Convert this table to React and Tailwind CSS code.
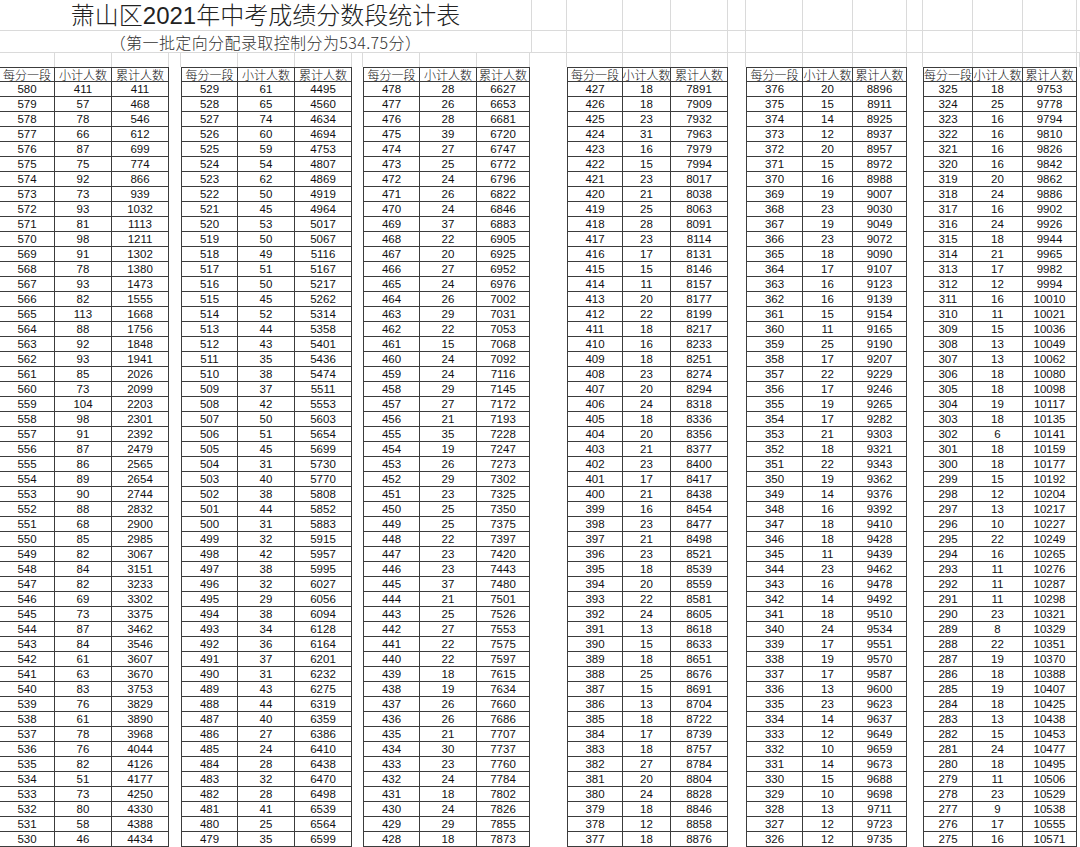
import React from 'react'

const groups = [
  { start: 580, sub: [411,57,78,66,87,75,92,73,93,81,98,91,78,93,82,113,88,92,93,85,73,104,98,91,87,86,89,90,88,68,85,82,84,82,69,73,87,84,61,63,83,76,61,78,76,82,51,73,80,58,46] },
  { start: 529, sub: [61,65,74,60,59,54,62,50,45,53,50,49,51,50,45,52,44,43,35,38,37,42,50,51,45,31,40,38,44,31,32,42,38,32,29,38,34,36,37,31,43,44,40,27,24,28,32,28,41,25,35] },
  { start: 478, sub: [28,26,28,39,27,25,24,26,24,37,22,20,27,24,26,29,22,15,24,24,29,27,21,35,19,26,29,23,25,25,22,23,23,37,21,25,27,22,22,18,19,26,26,21,30,23,24,18,24,29,18] },
  { start: 427, sub: [18,18,23,31,16,15,23,21,25,28,23,17,15,11,20,22,18,16,18,23,20,24,18,20,21,23,17,21,16,23,21,23,18,20,22,24,13,15,18,25,15,13,18,17,18,27,20,24,18,12,18] },
  { start: 376, sub: [20,15,14,12,20,15,16,19,23,19,23,18,17,16,16,15,11,25,17,22,17,19,17,21,18,22,19,14,16,18,18,11,23,16,14,18,24,17,19,17,13,23,14,12,10,14,15,10,13,12,12] },
  { start: 325, sub: [18,25,16,16,16,16,20,24,16,24,18,21,17,12,16,11,15,13,13,18,18,19,18,6,18,18,15,12,13,10,22,16,11,11,11,23,8,22,19,18,19,18,13,15,24,18,11,23,9,17,16] },
]

// running totals across all groups
let total = 0
const cum = groups.map(g => g.sub.map(n => (total += n)))

// column widths: [score, count, cumulative] per group, then the gap that follows
const layout = [
  { cols: ['w-[55px]', 'w-[57px]', 'w-[57px]'], gap: 'w-[12px]', first: '' },
  { cols: ['w-[57px]', 'w-[57px]', 'w-[57px]'], gap: 'w-[11px]', first: 'border-l' },
  { cols: ['w-[57px]', 'w-[57px]', 'w-[53px]'], gap: 'w-[37px]', first: 'border-l' },
  { cols: ['w-[56px]', 'w-[48px]', 'w-[57px]'], gap: 'w-[18px]', first: 'border-l' },
  { cols: ['w-[57px]', 'w-[50px]', 'w-[54px]'], gap: 'w-[16px]', first: 'border-l' },
  { cols: ['w-[50px]', 'w-[50px]', 'w-[54px]'], gap: 'flex-1', first: 'border-l' },
]

const rightCols = [
  'w-[56px]', 'w-[48px]', 'w-[57px]', 'w-[18px]',
  'w-[57px]', 'w-[50px]', 'w-[54px]', 'w-[16px]',
  'w-[50px]', 'w-[50px]', 'w-[54px]',
]

const heads = ['每分一段', '小计人数', '累计人数']

function TableRow({ cells, head }) {
  return (
    <div className="flex h-[15px]">
      {layout.map((g, gi) => (
        <React.Fragment key={gi}>
          {g.cols.map((w, ci) => (
            <div
              key={ci}
              className={`${w} ${ci === 0 ? g.first : ''} ${head ? 'border-t' : ''} shrink-0 flex items-center justify-center border-r border-b border-[#3c3c3c] overflow-hidden whitespace-nowrap`}
            >
              {cells(gi, ci)}
            </div>
          ))}
          <div className={`${g.gap} shrink-0`} />
        </React.Fragment>
      ))}
    </div>
  )
}

function TopRow({ h, children }) {
  return (
    <div className={`flex ${h} border-b border-[#dadada]`}>
      <div className="w-[532px] shrink-0 border-r border-[#dadada] flex items-center justify-center">
        {children}
      </div>
      <div className="w-[35px] shrink-0 border-r border-[#dadada]" />
      {rightCols.map((w, i) => (
        <div key={i} className={`${w} shrink-0 border-r border-[#dadada]`} />
      ))}
    </div>
  )
}

export default function App() {
  return (
    <div className="w-[1080px] h-[847px] overflow-hidden bg-white text-[#111]">
      <TopRow h="h-[31px]">
        <span className="text-[24px] leading-none pt-[2px] text-[#222] font-light font-['Liberation_Sans','Noto_Sans_CJK_SC',sans-serif]">
          萧山区2021年中考成绩分数段统计表
        </span>
      </TopRow>
      <TopRow h="h-[22px]">
        <span className="text-[16px] leading-none text-[#333] font-light tracking-[0.4px] font-['Noto_Sans_CJK_SC',sans-serif]">
          （第一批定向分配录取控制分为534.75分）
        </span>
      </TopRow>
      <div className="flex h-[14px]">
        {layout.map((g, gi) => (
          <React.Fragment key={gi}>
            {g.cols.map((w, ci) => (
              <div key={ci} className={`${w} shrink-0 border-r border-[#dadada]`} />
            ))}
            <div className={`${g.gap} shrink-0 border-r border-[#dadada]`} />
          </React.Fragment>
        ))}
      </div>
      <div className="text-[12px] leading-[13px] font-light font-['Noto_Sans_CJK_SC',sans-serif]">
        <TableRow head cells={(gi, ci) => heads[ci]} />
      </div>
      <div className="text-[11.5px] leading-[13px] font-['Liberation_Sans',sans-serif]">
        {groups[0].sub.map((_, i) => (
          <TableRow
            key={i}
            cells={(gi, ci) =>
              ci === 0 ? groups[gi].start - i : ci === 1 ? groups[gi].sub[i] : cum[gi][i]
            }
          />
        ))}
      </div>
    </div>
  )
}
